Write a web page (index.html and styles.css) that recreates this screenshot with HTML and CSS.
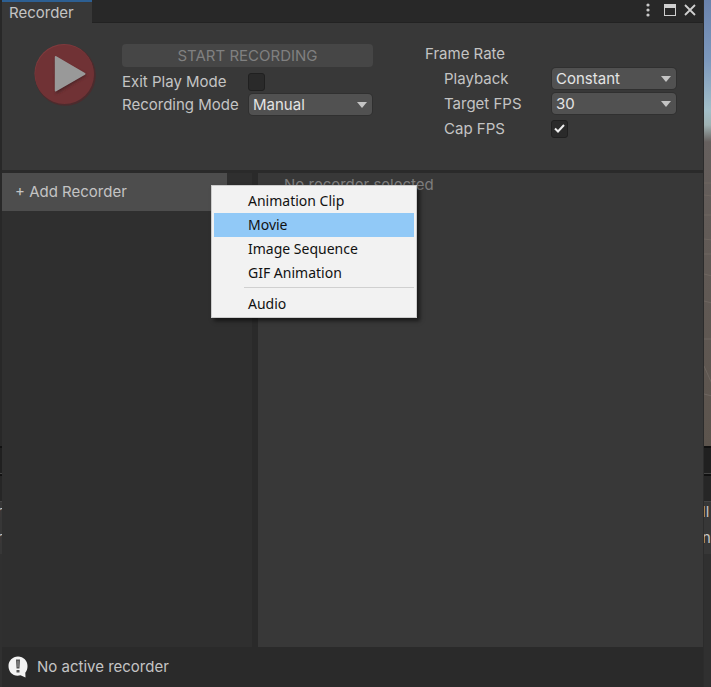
FILE: index.html
```html
<!DOCTYPE html>
<html lang="en">
<head>
<meta charset="utf-8">
<title>Recorder</title>
<link rel="stylesheet" href="styles.css">
</head>
<body>
<div class="desktop">
  <div class="edge edge-left" aria-hidden="true">
    <div class="edge-view"></div>
    <div class="edge-bar"></div>
    <div class="edge-bar edge-bar-low"></div>
    <span class="edge-text">r</span>
    <span class="edge-text">r</span>
  </div>
  <main class="window">
    <header class="titlebar">
      <h1 class="tab">Recorder</h1>
      <div class="window-buttons">
        <button class="icon-button" aria-label="Menu"><svg width="6" height="14" viewBox="0 0 6 14"><g fill="#c8c8c8"><circle cx="3" cy="2" r="1.6"/><circle cx="3" cy="7" r="1.6"/><circle cx="3" cy="12" r="1.6"/></g></svg></button>
        <button class="icon-button" aria-label="Maximize"><svg width="12" height="12" viewBox="0 0 12 12"><path d="M0 0h12v12H0zM1 4v7h10V4z" fill="#d0d0d0" fill-rule="evenodd"/></svg></button>
        <button class="icon-button" aria-label="Close"><svg width="12" height="12" viewBox="0 0 12 12"><path d="M1 1l10 10M11 1L1 11" stroke="#d0d0d0" stroke-width="1.8"/></svg></button>
      </div>
    </header>

    <section class="controls">
      <button class="record" aria-label="Record">
        <svg width="64" height="64" viewBox="0 0 64 64">
          <defs><filter id="soft" x="-20%" y="-20%" width="140%" height="140%"><feGaussianBlur stdDeviation="1.5"/></filter></defs>
          <circle cx="32.300" cy="31.300" r="30.500" fill="#4c2b2d"/>
          <circle cx="31" cy="29.500" r="29.500" fill="#803a3d"/>
          <circle cx="31.500" cy="30.500" r="29.500" fill="#703235"/>
          <path d="M22 15L54 31L23 50z" fill="#4c2426" filter="url(#soft)"/>
          <path d="M22.800 13L51.500 29.800L22.800 46.500z" fill="#999" stroke="#999" stroke-width="2" stroke-linejoin="round"/>
        </svg>
      </button>
      <div class="record-settings">
        <button class="start" disabled>START RECORDING</button>
        <div class="field">
          <label for="exit">Exit Play Mode</label>
          <input class="check" type="checkbox" id="exit">
        </div>
        <div class="field">
          <label for="mode">Recording Mode</label>
          <div class="dropdown">
            <select id="mode"><option>Manual</option></select>
            <svg class="arrow" width="10" height="6" viewBox="0 0 10 6"><path d="M0 0h10L5 6z" fill="#c4c4c4"/></svg>
          </div>
        </div>
      </div>
      <fieldset class="rate">
        <legend>Frame Rate</legend>
        <div class="field">
          <label for="playback">Playback</label>
          <div class="dropdown">
            <select id="playback"><option>Constant</option></select>
            <svg class="arrow" width="10" height="6" viewBox="0 0 10 6"><path d="M0 0h10L5 6z" fill="#c4c4c4"/></svg>
          </div>
        </div>
        <div class="field">
          <label for="fps">Target FPS</label>
          <div class="dropdown">
            <select id="fps"><option>30</option></select>
            <svg class="arrow" width="10" height="6" viewBox="0 0 10 6"><path d="M0 0h10L5 6z" fill="#c4c4c4"/></svg>
          </div>
        </div>
        <div class="field">
          <label for="cap">Cap FPS</label>
          <div class="check-box">
            <input class="check" type="checkbox" id="cap" checked>
            <svg class="tick" width="11" height="9" viewBox="0 0 11 9"><path d="M1 4.500L4 7.500L10 1" fill="none" stroke="#eee" stroke-width="2"/></svg>
          </div>
        </div>
      </fieldset>
    </section>

    <section class="workspace">
      <div class="recorders">
        <button class="add" aria-haspopup="menu">+ Add Recorder</button>
        <div class="menu" role="menu">
          <button role="menuitem">Animation Clip</button>
          <button role="menuitem" class="active">Movie</button>
          <button role="menuitem">Image Sequence</button>
          <button role="menuitem">GIF Animation</button>
          <hr>
          <button role="menuitem">Audio</button>
        </div>
      </div>
      <div class="details"><p>No recorder selected</p></div>
    </section>

    <footer class="status">
      <svg width="20" height="22" viewBox="0 0 20 22"><path d="M10 0.500C15.500 0.500 19.500 4.800 19.500 10C19.500 12.800 18.800 15 17.300 16.800L17.500 21.500L12.500 19.300C5.500 21 0.500 16.500 0.500 10C0.500 4.800 4.500 0.500 10 0.500z" fill="#f4f4f4"/><path d="M8 3.500h4l-.5 9h-3z" fill="#555"/><path d="M9.500 5h1v6h-1z" fill="#999"/><rect x="8.500" y="14" width="3" height="2.500" fill="#555"/></svg>
      <span>No active recorder</span>
    </footer>
  </main>
  <div class="edge edge-right" aria-hidden="true">
    <div class="edge-view scene"><svg width="8" height="446" viewBox="0 0 8 446"><path d="M0 183h8M0 195l8 1M0 215h8M0 239l8 1M0 254h8M0 274l8 2M0 301l8 2M0 339h8M0 366L8 384M0 394l8 2" stroke="#6e6660" fill="none"/></svg></div>
    <div class="edge-bar"></div>
    <div class="edge-bar edge-bar-low"></div>
    <span class="edge-text">ll</span>
    <span class="edge-text">n</span>
  </div>
</div>
</body>
</html>
```
FILE: styles.css
```css
* { box-sizing: border-box; }

body {
  margin: 0;
  background: #2c2c2c;
  color: #c4c4c4;
  font: 15px/20px Inter, "Liberation Sans", sans-serif;
}

button, select {
  margin: 0;
  padding: 0;
  border: 0;
  background: none;
  color: inherit;
  font: inherit;
}

.desktop {
  display: grid;
  grid-template-columns: 2px minmax(0, 1fr) 7px;
  min-height: 100vh;
}

/* Slivers of the editor behind the floating window */
.edge { overflow: hidden; background: #303030; }
.edge-view { height: 446px; background: #282828; }
.scene {
  background: linear-gradient(#6a83ad 0, #7c98bd 60px, #a3bfc9 110px, #9fb2b3 125px, #66605e 142px, #625b57 230px, #5c544d 446px);
}
.scene svg { display: block; }
.edge-bar {
  height: 28px;
  border-top: 2px solid #111;
  border-bottom: 1px solid #444;
  background: #202020;
}
.edge-bar-low { background: #262626; }
.edge-text {
  display: block;
  height: 26px;
  line-height: 20px;
  background: #373737;
}
.edge-left .edge-text { text-indent: -3px; }
.edge-right .edge-text { text-indent: -2px; }

.window {
  display: grid;
  grid-template-rows: 23px 147px minmax(0, 1fr) 40px;
  background: #2a2a2a;
  border-right: 1px solid #2c2c2c;
}

.titlebar {
  display: flex;
  justify-content: space-between;
  align-items: stretch;
  background: #282828;
  border-bottom: 1px solid #222;
}
.tab {
  width: 90px;
  margin: 0 0 -1px;
  padding-left: 7px;
  border-top: 2px solid #2d5f92;
  background: #383838;
  font-size: 15px;
  font-weight: 400;
  line-height: 21px;
}
.window-buttons {
  display: flex;
  align-items: center;
  gap: 8px;
  padding: 0 7px 2px 0;
}
.icon-button { display: grid; place-items: center; min-width: 12px; height: 16px; }
.icon-button:first-child { min-width: 16px; }
.icon-button svg { display: block; }

.controls {
  display: grid;
  grid-template-columns: 64px 251px 252px;
  column-gap: 25px;
  justify-content: start;
  align-items: start;
  padding: 21px 26px 0 31px;
  background: #383838;
}
.record svg { display: block; }
.start {
  display: block;
  width: 100%;
  height: 23px;
  margin-bottom: 3px;
  border-radius: 4px;
  background: #464646;
  color: #808080;
}
.field {
  display: grid;
  grid-template-columns: 127px minmax(0, 1fr);
  align-items: center;
  height: 23px;
}
.dropdown, .check-box { display: grid; align-items: center; }
.dropdown select, .dropdown .arrow, .check-box > * { grid-area: 1 / 1; }
.dropdown { width: 123px; }
.dropdown select {
  appearance: none;
  width: 100%;
  height: 21px;
  padding-left: 4px;
  border-radius: 4px;
  background: #515151;
  box-shadow: 0 0 0 1px #303030;
  color: #e4e4e4;
}
.arrow { justify-self: end; margin-right: 5px; pointer-events: none; }
.check {
  appearance: none;
  width: 17px;
  height: 18px;
  margin: 0;
  border: 1px solid #202020;
  border-radius: 3px;
  background: #2a2a2a;
}
.field .check { margin-left: -1px; }
.tick { margin-left: 2px; pointer-events: none; }

.rate {
  min-width: 0;
  margin: 0 0 0 27px;
  padding: 0 0 0 19px;
  border: 0;
}
.rate legend { margin-left: -19px; padding: 0; height: 22px; line-height: 20px; }
.rate .field { grid-template-columns: 108px 124px; height: 25px; }
.rate .dropdown { width: 124px; }

.workspace {
  display: grid;
  grid-template-columns: 250px minmax(0, 1fr);
  column-gap: 6px;
  padding-top: 3px;
}
.recorders { position: relative; background: #2f2f2f; }
.add {
  display: block;
  width: 225px;
  height: 38px;
  padding-left: 13px;
  background: #4d4d4d;
  text-align: left;
}
.details { background: #383838; color: #7d7d7d; }
.details p { margin: 2px 26px; }

.menu {
  position: absolute;
  z-index: 1;
  top: 12px;
  left: 209px;
  width: 206px;
  padding: 3px 2px 1px;
  border: 1px solid #ccc;
  background: #f2f2f2;
  box-shadow: 3px 3px 4px rgba(0, 0, 0, .55);
  color: #111;
  font: 14px/24px "Noto Sans", "Open Sans", sans-serif;
}
.menu button {
  display: block;
  width: 100%;
  height: 24px;
  padding-left: 34px;
  text-align: left;
}
.menu .active { background: #91c9f7; }
.menu hr {
  height: 1px;
  margin: 2px 0 4px 30px;
  border: 0;
  background: #d0d0d0;
}

.status {
  display: flex;
  align-items: center;
  gap: 9px;
  padding-left: 6px;
}
```
